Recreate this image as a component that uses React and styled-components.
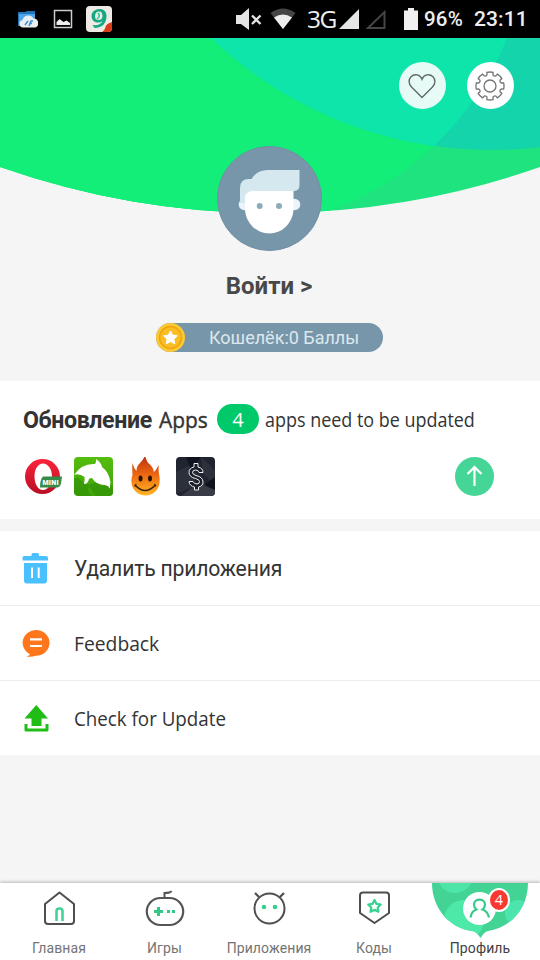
import React from "react";
import styled, { createGlobalStyle } from "styled-components";

const Global = createGlobalStyle`
  * { box-sizing: border-box; }
  body { margin: 0; background: #f5f5f5; }
  svg { display: block; flex: none; }
`;

const latin = `"Open Sans", "Noto Sans", sans-serif`;
const cyr = `Roboto, "Noto Sans", sans-serif`;

const Screen = styled.div`
  width: 540px;
  height: 960px;
  display: flex;
  flex-direction: column;
  overflow: hidden;
  background: #f5f5f5;
  font-family: ${cyr};
  color: #333;
`;

const StatusBar = styled.div`
  height: 38px;
  flex: none;
  display: flex;
  align-items: center;
  background: #000;
  color: #eee;
`;

const StatusText = styled.span`
  font-family: ${(p) => p.$family || cyr};
  font-size: ${(p) => p.$size || 20}px;
  font-weight: ${(p) => p.$weight || 500};
  letter-spacing: ${(p) => p.$track || 0}px;
  line-height: 38px;
  white-space: nowrap;
  width: ${(p) => p.$width}px;
  margin-left: ${(p) => p.$gap}px;
`;

const StatusIcon = styled.svg`
  margin-left: ${(p) => p.$gap}px;
`;

const Profile = styled.section`
  height: 343px;
  flex: none;
  position: relative;
  display: flex;
  flex-direction: column;
  align-items: center;
`;

const Backdrop = styled.svg`
  position: absolute;
  inset: 0;
`;

const Actions = styled.div`
  position: relative;
  align-self: stretch;
  display: flex;
  justify-content: flex-end;
  gap: 21px;
  padding: 24px 26px 0 0;
`;

const RoundButton = styled.button`
  width: 47px;
  height: 47px;
  padding: 0 1px 0 0;
  border: 0;
  border-radius: 50%;
  display: flex;
  align-items: center;
  justify-content: center;
  background: ${(p) => p.$bg};
`;

const Avatar = styled.svg`
  position: relative;
  margin: 36px 1px 0 0;
`;

const Login = styled.div`
  height: 32px;
  margin: 19px 2px 0 0;
  font-size: 24px;
  line-height: 32px;
  font-weight: 700;
  color: #484848;
`;

const Wallet = styled.div`
  width: 227px;
  height: 29px;
  margin: 21px 1px 0 0;
  display: flex;
  align-items: center;
  border-radius: 15px;
  background: #7896aa;
  color: #dce8ee;
  font-size: 18px;
  white-space: nowrap;
`;

const WalletLabel = styled.span`
  margin-left: 24px;
  line-height: 29px;
`;

const UpdateCard = styled.section`
  height: 138px;
  flex: none;
  padding: 0 46px 0 23px;
  background: #fff;
`;

const UpdateTitle = styled.div`
  height: 77px;
  margin-bottom: -1px;
  display: flex;
  align-items: center;
  white-space: nowrap;
`;

const Heading = styled.span`
  width: 136px;
  flex: none;
  font-size: 23.2px;
  font-weight: 700;
  letter-spacing: -0.4px;
`;

/* Narrowed to get condensed Latin letterforms. */
const Latin = styled.span`
  display: block;
  flex: none;
  width: ${(p) => (p.$width ? `${p.$width}px` : "auto")};
  font-family: ${latin};
  font-size: ${(p) => p.$size}px;
  -webkit-text-stroke: ${(p) => p.$stroke || 0}px currentColor;
  transform: scaleX(${(p) => p.$squeeze});
  transform-origin: 0 50%;
  line-height: 32px;
  white-space: nowrap;
`;

const Count = styled.span`
  width: 42px;
  height: 30px;
  flex: none;
  margin: 0 6px 1px 9px;
  border-radius: 15px;
  background: #00c969;
  color: #fff;
  font: 20px/31px ${latin};
  text-align: center;
`;

const AppRow = styled.div`
  height: 39px;
  display: flex;
  gap: 12px;
`;

const UpdateIcon = styled.svg`
  margin-left: auto;
`;

const Menu = styled.nav`
  flex: none;
  margin-top: 12px;
  background: #fff;
`;

const MenuItem = styled.div`
  height: 75px;
  display: flex;
  align-items: center;
  padding-left: 22px;
  border-bottom: ${(p) => (p.$last ? "0" : "1px solid #ececec")};
  &:last-child { height: 74px; }
`;

const MenuIcon = styled.svg`
  margin-right: 24px;
`;

const MenuLabel = styled.span`
  padding-top: 2px;
  font-size: 21.2px;
  line-height: 32px;
  letter-spacing: -0.22px;
`;

const TabBar = styled.nav`
  height: 77px;
  flex: none;
  margin-top: auto;
  display: grid;
  grid-template-columns: 118px 93px 116px 94px 118px;
  background: #fff;
  box-shadow: 0 -1px 3px rgba(0, 0, 0, 0.25);
`;

const Tab = styled.div`
  display: flex;
  flex-direction: column;
  align-items: center;
  color: ${(p) => (p.$active ? "#414141" : "#747474")};
`;

const TabIcon = styled.svg`
  height: 56px;
  overflow: visible;
`;

const TabLabel = styled.span`
  font-size: 14px;
  line-height: 18px;
  letter-spacing: 0.1px;
`;

function AppsStatus() {
  return (
    <>
      <StatusIcon $gap={17} width="21" height="20" viewBox="0 0 21 20">
        <path d="M1 3h7l2-1h8v15H1z" fill="#2176bb" />
        <path d="M2 5h16v12H2z" fill="#51a4e8" />
        <path d="M6 18.500a3.800 3.800 0 0 1-.5-7.500 6 6 0 0 1 11-1.500 4.700 4.700 0 0 1 2 9z" fill="#e8eef2" />
        <path d="M8 16l3-4M12 17l2-5h2M12.500 14.500h2.500" fill="none" stroke="#3d8ccf" strokeWidth="1.500" />
      </StatusIcon>
      <StatusIcon $gap={15} width="20" height="20" viewBox="0 0 20 20">
        <rect x="1.500" y="1.500" width="17" height="17" fill="none" stroke="#ccc" strokeWidth="1.500" />
        <path d="M3.500 16v-3l3-3 4 3 3-1.500 3.500 2.500v2z" fill="#eee" />
      </StatusIcon>
      <StatusIcon $gap={13} width="26" height="26" viewBox="0 0 26 26">
        <rect width="26" height="26" rx="4" fill="#eeeae6" />
        <path fillRule="evenodd" d="M14 3c4 0 6.500 3 6.500 7 0 7-4 12-12 12l-2-3q8 1 10-4-2 1.500-4.500 1.500C8 16.500 5.500 14 5.500 10S9 3 14 3zm-1 2.500c-2.500 0-4 2-4 4.500s1 4 3.500 4 4-1.500 4-4-1-4.500-3.500-4.500z" fill="#15a883" />
        <path d="M12 7q3 3-1 6" fill="none" stroke="#20c596" strokeWidth="1.500" />
        <path d="M26 16v6q0 4-4 4h-6q3-2 3.500-5 .5-3 6.500-5" fill="#d93c17" />
      </StatusIcon>
    </>
  );
}

function OperaIcon() {
  return (
    <svg width="39" height="39" viewBox="0 0 39 39">
      <defs><linearGradient id="op" x2="0" y2="1"><stop stopColor="#fb233b" /><stop offset="1" stopColor="#b80f24" /></linearGradient></defs>
      <path fillRule="evenodd" d="M19.500 2a17.500 17.500 0 1 1 0 35 17.500 17.500 0 0 1 0-35zm.5 4.500c-5 0-8.500 5.500-8.500 13S15 33 20 33s9-6 9-13.500-4-13-9-13z" fill="url(#op)" />
      <path d="M20 19.500h19l-1 7q-1 4-4 4H17q0-8 3-11z" fill="#378b48" />
      <text x="19.500" y="27.500" fontFamily="Roboto" fontSize="7" fontWeight="900" fill="#fff" textLength="16">MINI</text>
    </svg>
  );
}

function DolphinIcon() {
  return (
    <svg width="39" height="39" viewBox="0 0 39 39">
      <defs><linearGradient id="dg" x2="0" y2="1"><stop stopColor="#55bd0d" /><stop offset="1" stopColor="#3da506" /></linearGradient></defs>
      <rect width="39" height="39" rx="4" fill="url(#dg)" />
      <path d="M0 22l4-2 6 6 5 2-1 5 3 6H4l-4-3zM14 28l8-3 6 4 7-2 4 3v7l-2 2H22z" fill="#2d8707" opacity=".5" />
      <path d="M0 18Q8 6 21 7q1.500-2 1-5 5 3 6 8 7 5 8.500 15-.5 2-.5 6.500-1.500-3-5-3.500-9 0-13-7-1.500 0-3 1-1 5-5 5 1-4 .5-7Q5 16 0 18z" fill="#fff" />
    </svg>
  );
}

function FlameIcon() {
  return (
    <svg width="39" height="39" viewBox="0 0 39 39">
      <defs><linearGradient id="fl" x2="0" y2="1"><stop stopColor="#b92c0b" /><stop offset=".5" stopColor="#ef6a12" /><stop offset="1" stopColor="#ffb826" /></linearGradient></defs>
      <path d="M20.500 0q1 5 5 8 3 3 3.500 7 3-3 4.500-7 0 5 .5 9 1 3 .5 8a14 13.500 0 0 1-28 0q-.5-4 1-7-.5-7 0-12 1 5 4 8 0-5 3.500-8 4-4 5-8z" fill="url(#fl)" />
      <ellipse cx="15.500" cy="21.500" rx="2" ry="3" fill="#291305" /><ellipse cx="25" cy="21.500" rx="2" ry="3" fill="#291305" />
      <path d="M10.500 28.500q9.500 10 19.500 0M9.500 29l2-1.500M31 29l-2-1.500" fill="none" stroke="#38200a" strokeWidth="1.600" />
    </svg>
  );
}

function DollarIcon() {
  return (
    <svg width="39" height="39" viewBox="0 0 39 39">
      <rect width="39" height="39" rx="4" fill="#202430" />
      <path d="M0 15l14-7 7 9-6 14-15 6zM25 0l14 13v15L27 16z" fill="#2c303b" />
      <path d="M5 39l20-15 14 9v2q0 4-4 4z" fill="#383b46" /><path d="M10 0h15L15 13zM39 20L28 28l11 5z" fill="#10131d" />
      <path d="M18 6.500h4v3.500q5 1 5 5.500h-4q-.5-2.500-3.500-2.500t-3 2.500q0 2 3.500 3 7 1.500 7 6.500 0 4-4.500 5v3h-4v-3q-5-1-5.500-5.500h4q1 2.500 4 2.500 2.500 0 2.500-2.500 0-2-4-3-6.500-1.500-6.500-6 0-4.500 5-5.500z" fill="#1b1f29" stroke="#eee" strokeWidth="1" />
    </svg>
  );
}

function AvatarFace() {
  return (
    <Avatar width="106" height="106" viewBox="0.5 -0.5 106 106">
      <circle cx="53" cy="53" r="52" fill="#7896aa" stroke="#718fa6" />
      <circle cx="28" cy="59" r="5.800" fill="#ebf4f8" /><circle cx="78" cy="59" r="5.800" fill="#ebf4f8" />
      <path d="M23.500 57.500v-15q0-9 9-9h2.500q5-8.500 16-9h32v15q0 6-6 6H42l-12 12z" fill="#d5e7ef" />
      <path d="M28.500 53.500q0-8 8-8H77v19a24.300 25 0 0 1-48.500 0z" fill="#fff" />
      <circle cx="43.200" cy="60.500" r="3" fill="#8badbb" /><circle cx="62.500" cy="60.500" r="3" fill="#8badbb" />
    </Avatar>
  );
}

const gearOutline = Array.from({ length: 8 }, (_, i) => {
  const at = (r, deg) => {
    const a = ((i * 45 + deg - 90) * Math.PI) / 180;
    return `${(15 + r * Math.cos(a)).toFixed(2)} ${(15 + r * Math.sin(a)).toFixed(2)}`;
  };
  return `${i ? "L" : "M"}${at(11.6, -15)}L${at(14, -13)}Q${at(14.4, 0)} ${at(14, 13)}L${at(11.6, 15)}Q${at(10.4, 22.5)} ${at(11.6, 30)}`;
}).join("") + "Z";

export default function App() {
  return (
    <Screen>
      <Global />
      <StatusBar>
        <AppsStatus />
        <StatusIcon $gap={124} width="26" height="24" viewBox="0 0 26 24">
          <path d="M0 8h5l8-7v22l-8-6H0z" fill="#e4e4e4" />
          <path d="M16 8.500l8.500 8.500M24.500 8.500L16 17" stroke="#e4e4e4" strokeWidth="2.300" />
        </StatusIcon>
        <StatusIcon $gap={8} width="26" height="22" viewBox="0 0 26 22">
          <path d="M.5 5Q13-4 25.500 5L13 21z" fill="#454545" />
          <path d="M4 9.500Q13 3.500 22 9.500L13 21z" fill="#eee" />
        </StatusIcon>
        <StatusText $family={latin} $size={24.5} $weight={400} $track={-1.5} $width={31} $gap={11}>3G</StatusText>
        <StatusIcon $gap={1} width="20" height="21" viewBox="0 0 20 21"><path d="M20 0v20H0z" fill="#e6e6e6" /></StatusIcon>
        <StatusIcon $gap={6} width="21" height="21" viewBox="0 0 21 21"><path d="M19.500 3v16H3z" fill="none" stroke="#464646" strokeWidth="2" /></StatusIcon>
        <StatusIcon $gap={18} width="14" height="22" viewBox="0 0 14 22"><path d="M0 2.500h4V0h6v2.500h4V22H0z" fill="#f1f1f1" /></StatusIcon>
        <StatusText $size={20.5} $track={0.2} $width={42} $gap={6}>96%</StatusText>
        <StatusText $size={21} $track={0.1} $width={54} $gap={8}>23:11</StatusText>
      </StatusBar>

      <Profile>
        <Backdrop width="540" height="343" viewBox="0 38 540 343">
          <defs>
            <clipPath id="dome"><path d="M0 38H540V167A815 815 0 0 1 0 167Z" /></clipPath>
            <clipPath id="cap"><circle cx="492" cy="-258.500" r="408.500" /></clipPath>
          </defs>
          <g clipPath="url(#dome)">
            <rect y="38" width="540" height="180" fill="#1ee37f" />
            <circle cx="225.500" cy="-74" r="303" fill="#12ee78" />
            <rect y="38" width="190" height="180" fill="#12ee78" />
            <g clipPath="url(#cap)">
              <rect y="38" width="540" height="180" fill="#14d4ac" />
              <circle cx="225.500" cy="-74" r="303" fill="#0de5ab" />
            </g>
          </g>
        </Backdrop>
        <Actions>
          <RoundButton $bg="#e6fbf6" aria-label="Favorites">
            <svg width="30" height="30" viewBox="0 0 30 30"><path d="M15 26.500L4.500 16C1.500 13 1.300 8.500 4 5.800c3.500-3.500 9-2.500 11 2.500 2-5 7.500-6 11-2.500 2.700 2.700 2.500 7.200-.5 10.200z" fill="none" stroke="#626866" strokeWidth="1.400" /></svg>
          </RoundButton>
          <RoundButton $bg="#fff" aria-label="Settings">
            <svg width="30" height="30" viewBox="0 0 30 30" fill="none" stroke="#747474" strokeWidth="1.300"><path d={gearOutline} /><circle cx="15" cy="15" r="6" /></svg>
          </RoundButton>
        </Actions>
        <AvatarFace />
        <Login>Войти &gt;</Login>
        <Wallet>
          <svg width="29" height="29" viewBox="0 0 29 29"><circle cx="14.500" cy="14.500" r="14.500" fill="#fbc933" /><circle cx="14.500" cy="14.500" r="11" fill="#f9bd25" stroke="#eea60b" strokeWidth="1.500" /><path d="M14.500 8l2.100 4.100 4.700.7-3.400 3.300.8 4.700-4.200-2.200-4.200 2.200.8-4.700-3.400-3.300 4.700-.7z" fill="#fff" stroke="#fff" strokeLinejoin="round" /></svg>
          <WalletLabel>Кошелёк:0 Баллы</WalletLabel>
        </Wallet>
      </Profile>

      <UpdateCard>
        <UpdateTitle>
          <Heading>Обновление</Heading>
          <Latin $size={22.5} $stroke={0.4} $squeeze={0.93} $width={49}>Apps</Latin>
          <Count>4</Count>
          <Latin $size={20} $squeeze={0.897}>apps need to be updated</Latin>
        </UpdateTitle>
        <AppRow>
          <OperaIcon /><DolphinIcon /><FlameIcon /><DollarIcon />
          <UpdateIcon width="39" height="39" viewBox="0 0 39 39"><circle cx="19.500" cy="19.500" r="19.500" fill="#45d597" /><path d="M19.500 29V10M12.500 17l7-7 7 7" fill="none" stroke="#fff" strokeWidth="2.200" /></UpdateIcon>
        </AppRow>
      </UpdateCard>

      <Menu>
        <MenuItem>
          <MenuIcon width="28" height="32" viewBox="0 0 28 32"><path d="M2 4h7.500V2.500q0-1.500 1.500-1.500h4.500Q17 1 17 2.500V4h7q2 0 2 2v2.500H.5V6q0-2 1.500-2zM2 11h23v17.500q0 3-3 3H5q-3 0-3-3z" fill="#4bc0ff" /><path d="M10 15.500V26M16.700 15.500V26" stroke="#fff" strokeWidth="2" /></MenuIcon>
          <MenuLabel>Удалить приложения</MenuLabel>
        </MenuItem>
        <MenuItem>
          <MenuIcon width="28" height="28" viewBox="0 0 28 28"><path d="M14 1a13.500 12.800 0 0 1 0 25.700Q9 28.300 4.500 27.500 7 27 8 25.200A13.500 12.800 0 0 1 14 1z" fill="#ff761b" /><path d="M8 10.300h12M8 17h12" stroke="#fff" strokeWidth="2.200" /></MenuIcon>
          <Latin $size={20.5} $squeeze={0.94}>Feedback</Latin>
        </MenuItem>
        <MenuItem $last>
          <MenuIcon width="28" height="28" viewBox="0 0 28 28"><path d="M14.300 1L26 14.500h-6.500V22h-10v-7.500H2.500z" fill="#20bd16" /><path d="M4 20v6h21v-6" fill="none" stroke="#20bd16" strokeWidth="3" strokeLinejoin="round" /></MenuIcon>
          <Latin $size={20.5} $squeeze={0.915}>Check for Update</Latin>
        </MenuItem>
      </Menu>

      <TabBar>
        <Tab>
          <TabIcon width="40" viewBox="0 0 40 56"><path d="M20.500 9.500L35 21v17q0 3-3 3H9q-3 0-3-3V21z" fill="none" stroke="#4e4e4e" strokeWidth="2" strokeLinejoin="round" /><path d="M17.500 38V28q0-2.500 3-2.500t3 2.500v10" fill="none" stroke="#43d096" strokeWidth="2.500" /></TabIcon>
          <TabLabel>Главная</TabLabel>
        </Tab>
        <Tab>
          <TabIcon width="40" viewBox="0 0 40 56"><rect x="1.800" y="15" width="36.400" height="27" rx="13.500" fill="none" stroke="#555" strokeWidth="2.200" /><path d="M19.500 14v-4q6 0 7-2" fill="none" stroke="#555" strokeWidth="2" /><path d="M9 28.500h9M13.500 24v9M22 28.500h3M27 28.500h3" stroke="#32c988" strokeWidth="3" /></TabIcon>
          <TabLabel>Игры</TabLabel>
        </Tab>
        <Tab>
          <TabIcon width="40" viewBox="0 0 40 56"><circle cx="20.500" cy="25.500" r="15" fill="none" stroke="#4e4e4e" strokeWidth="2" /><path d="M10 14L6 10M31 14l4-4" stroke="#4e4e4e" strokeWidth="2.200" /><circle cx="15" cy="24" r="2.300" fill="#36cf91" /><circle cx="26" cy="24" r="2.300" fill="#36cf91" /></TabIcon>
          <TabLabel>Приложения</TabLabel>
        </Tab>
        <Tab>
          <TabIcon width="40" viewBox="0 0 40 56"><path d="M9 9.500h23q3 0 3 3V30L20.500 40 6 30V12.500q0-3 3-3z" fill="none" stroke="#4e4e4e" strokeWidth="2" strokeLinejoin="round" /><path d="M20.500 17l2 3.900 4.300.6-3.100 3 .7 4.300-3.900-2-3.900 2 .7-4.300-3.100-3 4.300-.6z" fill="none" stroke="#39d091" strokeWidth="2.200" strokeLinejoin="round" /></TabIcon>
          <TabLabel>Коды</TabLabel>
        </Tab>
        <Tab $active>
          <TabIcon width="96" viewBox="0 0 96 56">
            <defs><clipPath id="pin"><path d="M0 0H96C96 27 77 45 56 48q-3 0-7.500 7Q44 48 40 48C18 45 0 26 0 0z" /></clipPath></defs>
            <g clipPath="url(#pin)"><rect width="96" height="56" fill="#43d394" /><circle cx="23" cy="-8" r="18" fill="#4ce5a7" /><circle cx="32" cy="37" r="20" fill="#4ce9a9" /><circle cx="86" cy="30" r="13" fill="#4ce5ad" /></g>
            <circle cx="47.500" cy="25.500" r="16.500" fill="#fff" />
            <path d="M38.500 34.500q1-6.500 6-8-2.500-2-2.500-5c0-6.500 11-6.500 11 0q0 3-2.500 5 5 1.500 6.500 8" fill="none" stroke="#35c98d" strokeWidth="2.200" />
            <ellipse cx="67" cy="17" rx="10" ry="11" fill="#f9392f" stroke="#fff" strokeWidth="2" />
            <text x="67" y="22.300" textAnchor="middle" fontFamily="Open Sans" fontSize="14.500" fill="#fff">4</text>
          </TabIcon>
          <TabLabel>Профиль</TabLabel>
        </Tab>
      </TabBar>
    </Screen>
  );
}
